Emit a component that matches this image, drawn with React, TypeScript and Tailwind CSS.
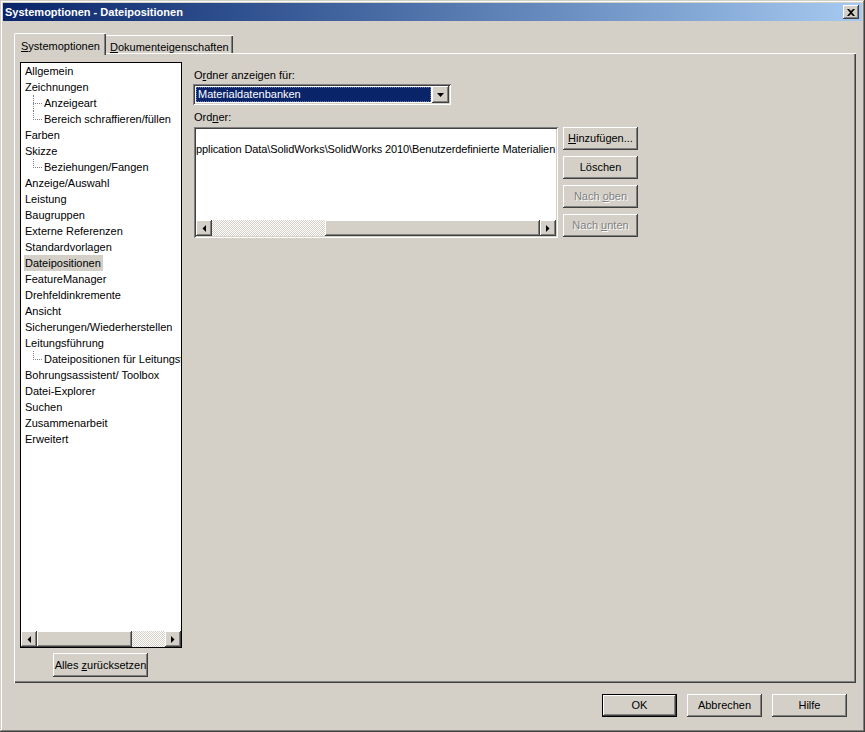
import React from "react"

const raised = "shadow-[inset_-1px_-1px_#404040,inset_1px_1px_#ffffff,inset_-2px_-2px_#808080,inset_2px_2px_#d4d0c8]"
const sunken = "shadow-[inset_1px_1px_#808080,inset_-1px_-1px_#ffffff,inset_2px_2px_#404040,inset_-2px_-2px_#d4d0c8]"
const checker = "bg-[image:repeating-conic-gradient(#d4d0c8_0%_25%,#ffffff_0%_50%)] bg-[length:2px_2px]"

type TreeItem = { text: string; child?: "mid" | "last"; selected?: boolean }

const treeItems: TreeItem[] = [
    { text: "Allgemein" },
    { text: "Zeichnungen" },
    { text: "Anzeigeart", child: "mid" },
    { text: "Bereich schraffieren/füllen", child: "last" },
    { text: "Farben" },
    { text: "Skizze" },
    { text: "Beziehungen/Fangen", child: "last" },
    { text: "Anzeige/Auswahl" },
    { text: "Leistung" },
    { text: "Baugruppen" },
    { text: "Externe Referenzen" },
    { text: "Standardvorlagen" },
    { text: "Dateipositionen", selected: true },
    { text: "FeatureManager" },
    { text: "Drehfeldinkremente" },
    { text: "Ansicht" },
    { text: "Sicherungen/Wiederherstellen" },
    { text: "Leitungsführung" },
    { text: "Dateipositionen für Leitungsführung", child: "last" },
    { text: "Bohrungsassistent/ Toolbox" },
    { text: "Datei-Explorer" },
    { text: "Suchen" },
    { text: "Zusammenarbeit" },
    { text: "Erweitert" },
]

function Arrow(props: { dir: "left" | "right" | "down" }) {
    if (props.dir === "down") {
        return (
            <svg width="7" height="4" viewBox="0 0 7 4">
                <path d="M0 0H7L3.5 4Z" fill="#000" />
            </svg>
        )
    }
    return (
        <svg width="4" height="7" viewBox="0 0 4 7">
            <path d={props.dir === "left" ? "M4 0V7L0.5 3.5Z" : "M0 0V7L3.5 3.5Z"} fill="#000" />
        </svg>
    )
}

function ScrollButton(props: { dir: "left" | "right" }) {
    return (
        <div className={`w-[16px] h-[16px] shrink-0 bg-[#d4d0c8] flex items-center justify-center ${raised}`}>
            <Arrow dir={props.dir} />
        </div>
    )
}

function HScroll(props: { before: number; thumb: number; after: number }) {
    return (
        <div className="flex flex-row h-[16px] shrink-0">
            <ScrollButton dir="left" />
            <div className={`h-full ${checker}`} style={{ width: props.before }}></div>
            <div className={`h-full bg-[#d4d0c8] ${raised}`} style={{ width: props.thumb }}></div>
            <div className={`h-full ${checker}`} style={{ width: props.after }}></div>
            <ScrollButton dir="right" />
        </div>
    )
}

type ButtonProps = {
    children: React.ReactNode
    disabled?: boolean
    isDefault?: boolean
}

function Button(props: ButtonProps) {
    const textCls = props.disabled ? "text-[#808080] [text-shadow:1px_1px_0_#ffffff]" : "text-black"
    if (props.isDefault) {
        return (
            <div className="w-[75px] h-[23px] border border-black">
                <div className={`w-full h-full bg-[#d4d0c8] flex items-center justify-center ${raised} ${textCls}`}>
                    {props.children}
                </div>
            </div>
        )
    }
    return (
        <div className={`w-[75px] h-[23px] shrink-0 bg-[#d4d0c8] flex items-center justify-center ${raised} ${textCls}`}>
            {props.children}
        </div>
    )
}

function TreeRow(props: { item: TreeItem }) {
    const { item } = props
    const label = (
        <span className={`pl-[1px] pr-[2px] leading-[16px] ${item.selected ? "bg-[#d4d0c8]" : ""}`}>{item.text}</span>
    )
    if (!item.child) {
        return <div className="h-[16px] flex flex-row items-center pl-[3px] whitespace-nowrap">{label}</div>
    }
    return (
        <div className="h-[16px] flex flex-row items-center pl-[12px] whitespace-nowrap">
            <div className="relative w-[10px] h-[16px] shrink-0">
                <div className={`absolute left-0 top-0 w-0 border-l border-dotted border-[#808080] ${item.child === "last" ? "h-[9px]" : "h-[16px]"}`}></div>
                <div className="absolute left-0 top-[8px] w-[9px] h-0 border-t border-dotted border-[#808080]"></div>
            </div>
            {label}
        </div>
    )
}

function App() {
    return (
        <div
            className="w-[865px] h-[732px] bg-[#d4d0c8] p-[3px] flex flex-col text-[11px] text-black shadow-[inset_-1px_-1px_#404040,inset_1px_1px_#d4d0c8,inset_-2px_-2px_#808080,inset_2px_2px_#ffffff]"
            style={{ fontFamily: '"Liberation Sans", Arial, sans-serif' }}
        >
            {/* title bar */}
            <div className="h-[18px] shrink-0 flex flex-row items-center justify-between pl-[2px] pr-[3px] bg-linear-to-r from-[#0a246a] to-[#a6caf0]">
                <span className="text-white font-bold text-[11px] leading-[18px]">Systemoptionen - Dateipositionen</span>
                <div className={`w-[16px] h-[14px] bg-[#d4d0c8] flex items-center justify-center ${raised}`}>
                    <svg width="8" height="7" viewBox="0 0 8 7">
                        <path d="M0 0H2L4 2L6 0H8L5 3.5L8 7H6L4 5L2 7H0L3 3.5Z" fill="#000" />
                    </svg>
                </div>
            </div>

            <div className="flex flex-col pl-[11px] pt-[12px]">
                {/* tabs */}
                <div className="flex flex-row items-end h-[20px]">
                    <div className="relative z-10 h-[22px] mb-[-2px] w-[92px] bg-[#d4d0c8] border-l border-t border-white rounded-tl-[2px] shadow-[inset_-1px_0_#404040,inset_-2px_0_#808080] flex items-start pt-[4px] pl-[6px]">
                        <span><span className="underline">S</span>ystemoptionen</span>
                    </div>
                    <div className="h-[18px] w-[127px] border-t border-white shadow-[inset_-1px_0_#404040,inset_-2px_0_#808080] flex items-start pt-[3px] pl-[4px]">
                        <span><span className="underline">D</span>okumenteigenschaften</span>
                    </div>
                </div>

                {/* panel */}
                <div className="w-[842px] h-[630px] flex flex-row pl-[6px] pt-[9px] shadow-[inset_1px_1px_#ffffff,inset_-1px_-1px_#404040,inset_-2px_-2px_#808080]">
                    {/* tree column */}
                    <div className="flex flex-col w-[162px]">
                        <div className="h-[586px] border border-black bg-white flex flex-col">
                            <div className="flex-1 overflow-hidden flex flex-col">
                                {treeItems.map(item => (
                                    <TreeRow key={item.text} item={item} />
                                ))}
                            </div>
                            <HScroll before={0} thumb={95} after={33} />
                        </div>
                        <div className="self-center mt-[5px] ml-[-1px]">
                            <div className={`w-[95px] h-[24px] bg-[#d4d0c8] flex items-center justify-center ${raised}`}>
                                <span>Alles <span className="underline">z</span>urücksetzen</span>
                            </div>
                        </div>
                    </div>

                    {/* right column */}
                    <div className="flex flex-col ml-[11px] pt-[7px]">
                        <div className="pl-[1px] leading-[13px]">O<span className="underline">r</span>dner anzeigen für:</div>
                        <div className={`mt-[2px] w-[258px] h-[21px] bg-white p-[2px] flex flex-row ${sunken}`}>
                            <div className="flex-1 flex items-center p-[1px]">
                                <div className="w-full h-full bg-[#0a246a] text-white flex items-center pl-[1px] border border-dotted border-[#6a7aa8]">
                                    Materialdatenbanken
                                </div>
                            </div>
                            <div className={`w-[17px] h-[17px] bg-[#d4d0c8] flex items-center justify-center ${raised}`}>
                                <Arrow dir="down" />
                            </div>
                        </div>
                        <div className="mt-[6px] pl-[1px] leading-[13px]">Ord<span className="underline">n</span>er:</div>
                        <div className="mt-[3px] flex flex-row items-start gap-[5px] ml-[1px]">
                            <div className={`w-[364px] h-[111px] bg-white p-[2px] flex flex-col ${sunken}`}>
                                <div className="flex-1 overflow-hidden pt-[12px] whitespace-nowrap leading-[16px] tracking-[-0.1px]">
                                    pplication Data\SolidWorks\SolidWorks 2010\Benutzerdefinierte Materialien
                                </div>
                                <HScroll before={113} thumb={215} after={0} />
                            </div>
                            <div className="flex flex-col gap-[6px]">
                                <Button><span><span className="underline">H</span>inzufügen...</span></Button>
                                <Button>Löschen</Button>
                                <Button disabled><span>Nach <span className="underline">o</span>ben</span></Button>
                                <Button disabled><span>Nach <span className="underline">u</span>nten</span></Button>
                            </div>
                        </div>
                    </div>
                </div>

                {/* dialog buttons */}
                <div className="flex flex-row justify-end items-center gap-[10px] mt-[11px] pr-[15px]">
                    <Button isDefault>OK</Button>
                    <Button>Abbrechen</Button>
                    <Button>Hilfe</Button>
                </div>
            </div>
        </div>
    )
}

export default App
